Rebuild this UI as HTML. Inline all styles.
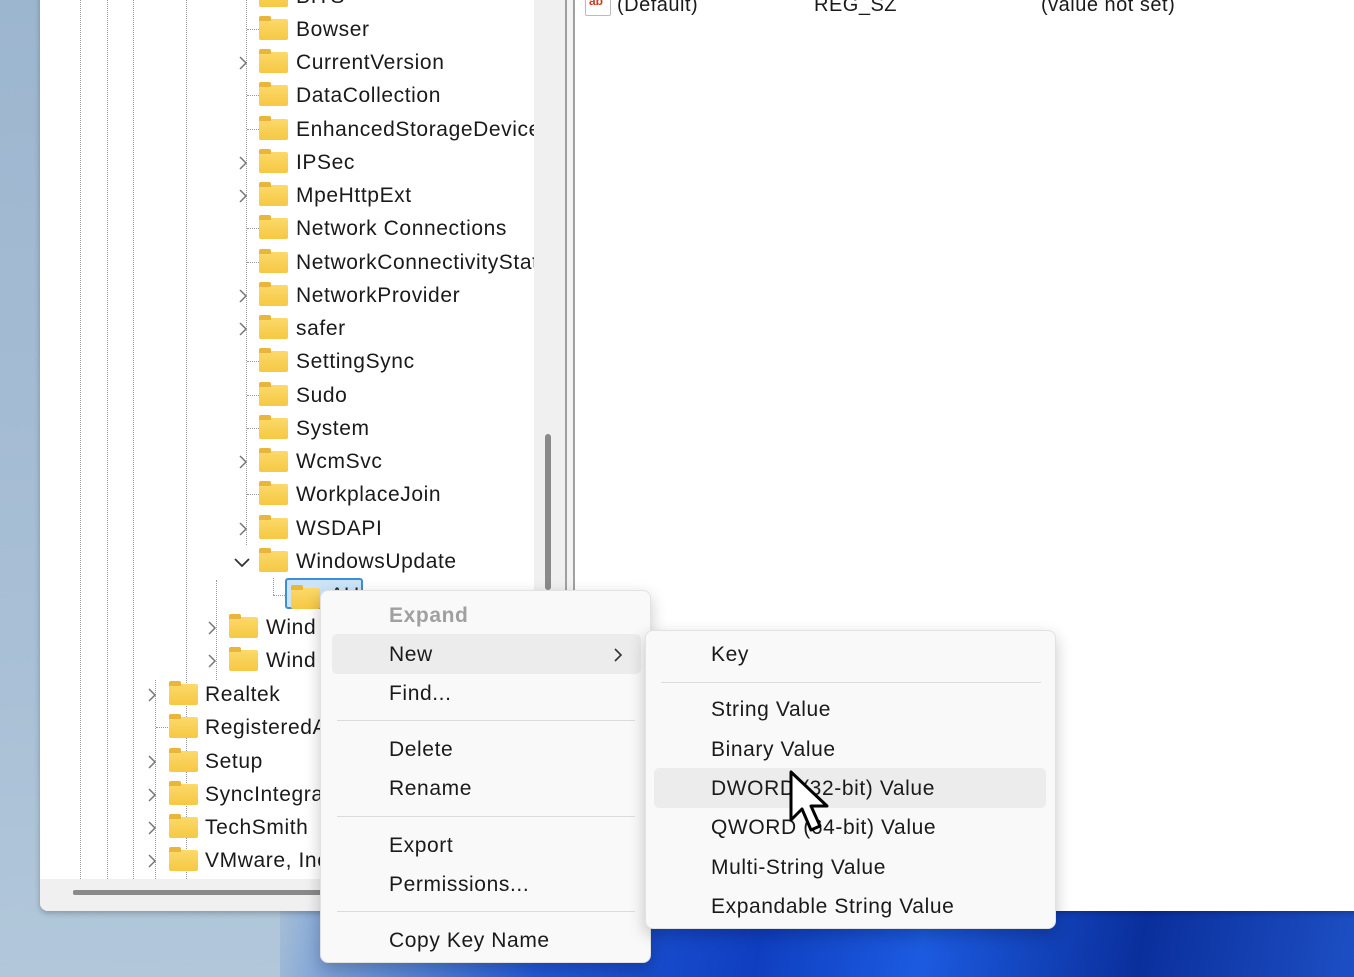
<!DOCTYPE html>
<html><head><meta charset="utf-8"><style>
*{margin:0;padding:0;box-sizing:border-box}
body{width:1354px;height:977px;overflow:hidden;position:relative;background:linear-gradient(180deg,#9db6cf 0%,#a9c0d6 70%,#b2c7da 100%);font-family:"Liberation Sans",sans-serif;color:#1a1a1a}
.wall{position:absolute;left:280px;top:880px;width:1074px;height:97px;background:linear-gradient(100deg,#a9c0d6 0%,#7aa0d8 6%,#2058d8 25%,#0f3fc0 45%,#1c5be0 60%,#0a2f9c 80%,#1d4fc4 100%)}
.win{position:absolute;left:40px;top:-10px;width:1330px;height:921px;background:#fff;border-radius:0 0 8px 8px;box-shadow:0 2px 6px rgba(0,0,0,.25)}
.hbar{position:absolute;left:40px;top:879px;width:525px;height:32px;background:#f0f0f0;border-radius:0 0 0 8px}
.hthumb{position:absolute;left:73px;top:890px;width:260px;height:5px;background:#8a8a8a;border-radius:2px}
.vtrack{position:absolute;left:534px;top:0;width:31px;height:879px;background:#f0f0f0}
.vthumb{position:absolute;left:545px;top:434px;width:6px;height:156px;background:#8a8a8a;border-radius:3px}
.spl{position:absolute;left:565px;top:0;width:10px;height:911px;background:#f3f3f3;border-left:2px solid #a0a0a0;border-right:2px solid #a0a0a0}
.row{position:absolute;height:33px;font-size:21px;line-height:33px;white-space:nowrap;letter-spacing:0.6px}
.f{position:absolute;width:29px;height:21px;top:6px;background:linear-gradient(#fcd96a,#f6c843);border-radius:2px}
.f:before{content:"";position:absolute;left:0;top:-3px;width:12px;height:5px;background:#e9b53b;border-radius:2px 2px 0 0}
.chev{position:absolute;top:0;font-size:18px;color:#777;line-height:33px}
.dl{position:absolute;border-left:1px dotted #999;width:0}
.menu{position:absolute;background:#f9f9f9;border:1px solid #e2e2e2;border-radius:8px;box-shadow:0 6px 16px rgba(0,0,0,.22)}
.mi{position:absolute;font-size:21px;line-height:39px;height:39px;letter-spacing:0.6px}
.sep{position:absolute;height:1px;background:#dcdcdc}
.hl{position:absolute;background:#ececec;border-radius:5px}
.ctext{position:absolute;font-size:20px;top:-8px;line-height:26px;letter-spacing:0.5px}
</style></head><body>
<div class="wall"></div>
<div class="win"></div>
<div class="vtrack"></div><div class="vthumb"></div>
<div class="spl"></div>
<div class="hbar"></div><div class="hthumb"></div>

<div class="dl" style="left:80px;top:0;height:879px"></div>
<div class="dl" style="left:107px;top:0;height:879px"></div>
<div class="dl" style="left:133px;top:0;height:879px"></div>
<div class="dl" style="left:186px;top:0;height:879px"></div>
<div class="dl" style="left:155px;top:680px;height:199px"></div>
<div class="dl" style="left:216px;top:580px;height:100px"></div>
<div class="dl" style="left:246px;top:0;height:545px"></div>

<!-- right pane -->
<div style="position:absolute;left:585px;top:-6px;width:26px;height:22px;border:1px solid #bbb;border-radius:2px;background:#fff;font-size:12px;color:#d03a1a;font-weight:bold;line-height:12px;padding-left:3px">ab</div>
<div class="ctext" style="left:617px">(Default)</div>
<div class="ctext" style="left:814px">REG_SZ</div>
<div class="ctext" style="left:1041px">(value not set)</div>

<div id="tree"></div>
<script>
const rows=[
["BITS",-4,0,0],["Bowser",29,0,0],["CurrentVersion",62,0,1],["DataCollection",95,0,0],["EnhancedStorageDevices",129,0,0],["IPSec",162,0,1],["MpeHttpExt",195,0,1],["Network Connections",228,0,0],["NetworkConnectivityStatus",262,0,0],["NetworkProvider",295,0,1],["safer",328,0,1],["SettingSync",361,0,0],["Sudo",395,0,0],["System",428,0,0],["WcmSvc",461,0,1],["WorkplaceJoin",494,0,0],["WSDAPI",528,0,1],["WindowsUpdate",561,0,2],
["Wind",627,1,1],["Wind",660,1,1],["Realtek",694,2,1],["RegisteredApplications",727,2,0],["Setup",761,2,1],["SyncIntegration",794,2,1],["TechSmith",827,2,1],["VMware, Inc.",860,2,1]];
const X=[[243,259,296],[212,229,266],[152,169,205]];
let h="";
for(const [t,y,l,c] of rows){const x=X[l];
h+=`<div class="row" style="left:0;top:${y-16}px;width:534px;overflow:hidden">`;
if(c==1)h+=`<span class="chev" style="left:${x[0]-5}px"><svg width="10" height="14" viewBox="0 0 10 14" style="vertical-align:middle"><path d="M2 1l6 6-6 6" fill="none" stroke="#777" stroke-width="1.5"/></svg></span>`;
if(c==2)h+=`<span class="chev" style="left:${x[0]-9}px"><svg width="16" height="10" viewBox="0 0 16 10" style="vertical-align:middle"><path d="M1 2l7 7 7-7" fill="none" stroke="#333" stroke-width="1.8"/></svg></span>`;
if(c==0)h+=`<span style="position:absolute;left:${x[0]+4}px;top:16px;width:12px;border-top:1px dotted #999"></span>`;
h+=`<span class="f" style="left:${x[1]}px"></span><span style="position:absolute;left:${x[2]}px">${t}</span></div>`;}
document.getElementById('tree').innerHTML=h;
</script>
<!-- AU selected -->
<div style="position:absolute;left:273px;top:578px;width:1px;height:17px;border-left:1px dotted #999"></div>
<div style="position:absolute;left:273px;top:595px;width:12px;border-top:1px dotted #999"></div>
<div style="position:absolute;left:285px;top:578px;width:78px;height:31px;background:#cce4f7;border:2px solid #3c8fd6;border-radius:3px"></div>
<div class="f" style="left:291px;top:588px"></div>
<div style="position:absolute;left:330px;top:584px;font-size:21px;color:#222">AU</div>

<!-- context menu -->
<div class="menu" style="left:320px;top:590px;width:331px;height:373px">
<div class="hl" style="left:11px;top:43px;width:309px;height:40px"></div>
<div class="mi" style="left:68px;top:5px;color:#a0a0a0;font-weight:bold">Expand</div>
<div class="mi" style="left:68px;top:44px">New</div>
<svg style="position:absolute;left:292px;top:56px" width="10" height="16" viewBox="0 0 10 16"><path d="M2 2l6 6-6 6" fill="none" stroke="#333" stroke-width="1.6"/></svg>
<div class="mi" style="left:68px;top:83px">Find...</div>
<div class="sep" style="left:16px;top:129px;width:298px"></div>
<div class="mi" style="left:68px;top:139px">Delete</div>
<div class="mi" style="left:68px;top:178px">Rename</div>
<div class="sep" style="left:16px;top:225px;width:298px"></div>
<div class="mi" style="left:68px;top:235px">Export</div>
<div class="mi" style="left:68px;top:274px">Permissions...</div>
<div class="sep" style="left:16px;top:320px;width:298px"></div>
<div class="mi" style="left:68px;top:330px">Copy Key Name</div>
</div>

<!-- submenu -->
<div class="menu" style="left:645px;top:630px;width:411px;height:299px">
<div class="hl" style="left:8px;top:137px;width:392px;height:40px"></div>
<div class="mi" style="left:65px;top:4px">Key</div>
<div class="sep" style="left:15px;top:51px;width:380px"></div>
<div class="mi" style="left:65px;top:59px">String Value</div>
<div class="mi" style="left:65px;top:99px">Binary Value</div>
<div class="mi" style="left:65px;top:138px">DWORD (32-bit) Value</div>
<div class="mi" style="left:65px;top:177px">QWORD (64-bit) Value</div>
<div class="mi" style="left:65px;top:217px">Multi-String Value</div>
<div class="mi" style="left:65px;top:256px">Expandable String Value</div>
</div>

<!-- cursor -->
<svg style="position:absolute;left:789px;top:770px" width="46" height="66" viewBox="0 0 46 66"><path d="M2 2 L2 50 L13 39 L22 60 L31 56 L22 36 L38 36 Z" fill="#fff" stroke="#000" stroke-width="3" stroke-linejoin="round"/></svg>
</body></html>
